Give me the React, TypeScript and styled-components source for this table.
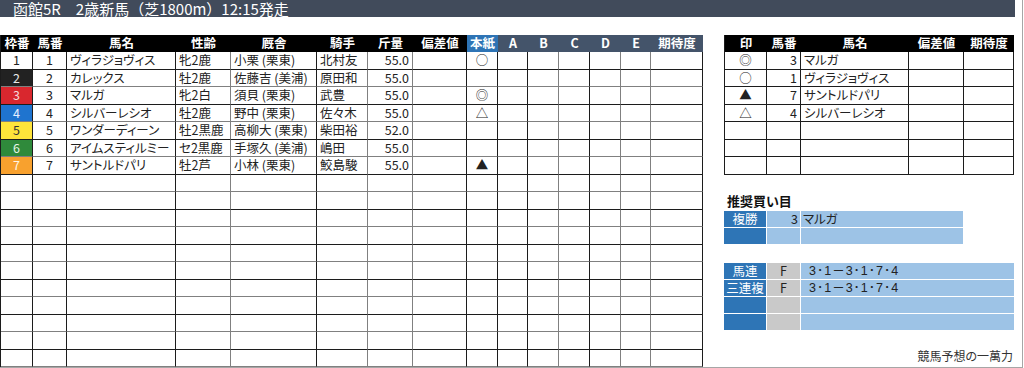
import React from 'react';
import styled, { createGlobalStyle } from 'styled-components';

const GlobalStyle = createGlobalStyle`
  html, body { margin: 0; padding: 0; background: #fff; }
  body {
    font-family: "Noto Sans CJK JP", "Noto Sans", sans-serif;
    color: #222;
    font-feature-settings: "palt";
  }
`;

const BLACK = '#1c1c1c';
const GREY = '#808080';

type Align = 'left' | 'center' | 'right';
type Head = 'black' | 'blue' | 'slate';

interface Col {
  label: string;
  width: number;
  align: Align;
  line: string;
  head: Head;
}

const MAIN_COLS: Col[] = [
  { label: '枠番', width: 33, align: 'center', line: BLACK, head: 'black' },
  { label: '馬番', width: 34, align: 'center', line: BLACK, head: 'black' },
  { label: '馬名', width: 109, align: 'left', line: BLACK, head: 'black' },
  { label: '性齢', width: 55, align: 'left', line: GREY, head: 'black' },
  { label: '厩舎', width: 86, align: 'left', line: BLACK, head: 'black' },
  { label: '騎手', width: 51, align: 'left', line: GREY, head: 'black' },
  { label: '斤量', width: 45, align: 'right', line: GREY, head: 'black' },
  { label: '偏差値', width: 54, align: 'center', line: BLACK, head: 'black' },
  { label: '本紙', width: 31, align: 'center', line: BLACK, head: 'blue' },
  { label: 'A', width: 30, align: 'center', line: BLACK, head: 'slate' },
  { label: 'B', width: 31, align: 'center', line: GREY, head: 'slate' },
  { label: 'C', width: 31, align: 'center', line: BLACK, head: 'slate' },
  { label: 'D', width: 31, align: 'center', line: GREY, head: 'slate' },
  { label: 'E', width: 30, align: 'center', line: GREY, head: 'slate' },
  { label: '期待度', width: 52, align: 'center', line: BLACK, head: 'slate' },
];

const MARK_COLS: Col[] = [
  { label: '印', width: 43, align: 'center', line: BLACK, head: 'black' },
  { label: '馬番', width: 34, align: 'right', line: BLACK, head: 'black' },
  { label: '馬名', width: 108, align: 'left', line: BLACK, head: 'black' },
  { label: '偏差値', width: 55, align: 'center', line: BLACK, head: 'black' },
  { label: '期待度', width: 50, align: 'center', line: BLACK, head: 'black' },
];

const WAKU: { bg: string; fg: string }[] = [
  { bg: '#ffffff', fg: '#222' },
  { bg: '#222222', fg: '#e8e8e8' },
  { bg: '#d9272e', fg: '#f6d6d6' },
  { bg: '#1f74cf', fg: '#e6f0ff' },
  { bg: '#ffe43a', fg: '#333' },
  { bg: '#2f8a3b', fg: '#e6f5e6' },
  { bg: '#f8a12e', fg: '#fff6e8' },
];

const HORSES = [
  ['1', 'ヴィラジョヴィス', '牝2鹿', '小栗 (栗東)', '北村友', '55.0', '', '○'],
  ['2', 'カレックス', '牡2鹿', '佐藤吉 (美浦)', '原田和', '55.0', '', ''],
  ['3', 'マルガ', '牝2白', '須貝 (栗東)', '武豊', '55.0', '', '◎'],
  ['4', 'シルバーレシオ', '牡2鹿', '野中 (栗東)', '佐々木', '55.0', '', '△'],
  ['5', 'ワンダーディーン', '牡2黒鹿', '高柳大 (栗東)', '柴田裕', '52.0', '', ''],
  ['6', 'アイムスティルミー', 'セ2黒鹿', '手塚久 (美浦)', '嶋田', '55.0', '', ''],
  ['7', 'サントルドパリ', '牡2芦', '小林 (栗東)', '鮫島駿', '55.0', '', '▲'],
];

const MARKS = [
  ['◎', '3', 'マルガ'],
  ['○', '1', 'ヴィラジョヴィス'],
  ['▲', '7', 'サントルドパリ'],
  ['△', '4', 'シルバーレシオ'],
];

const HEAD_BG: Record<Head, string> = {
  black: '#000000',
  blue: '#2e74b5',
  slate: '#44546a',
};

const rowHeight = (i: number) => (i % 2 === 0 ? 18 : 17);

const JUSTIFY: Record<Align, string> = {
  left: 'flex-start',
  center: 'center',
  right: 'flex-end',
};

const Sheet = styled.div`
  width: 1023px;
  height: 368px;
  box-sizing: border-box;
  border-right: 1px solid #a6a6a6;
  border-bottom: 1px solid #a6a6a6;
  display: flex;
  flex-direction: column;
  overflow: hidden;
`;

const TitleBar = styled.div`
  width: 1015px;
  height: 17px;
  flex-shrink: 0;
  display: flex;
  align-items: center;
  background: #414b5b;
  color: #fff;
  font-size: 15px;
  line-height: 1;
  padding-left: 13px;
  box-sizing: border-box;
  white-space: pre;
  font-feature-settings: normal;
`;

const Content = styled.div`
  display: flex;
  align-items: flex-start;
  margin-top: 18px;
  flex: 1;
`;

const Grid = styled.div`
  display: flex;
  flex-direction: column;
  border-left: 1px solid ${BLACK};
`;

const Row = styled.div<{ $h: number; $cols: string }>`
  display: grid;
  grid-template-columns: ${(p) => p.$cols};
  height: ${(p) => p.$h}px;
`;

const Cell = styled.div<{
  $align: Align;
  $line: string;
  $bottom: string;
  $bg?: string;
  $fg?: string;
}>`
  box-sizing: border-box;
  display: flex;
  align-items: center;
  justify-content: ${(p) => JUSTIFY[p.$align]};
  border-right: 1px solid ${(p) => p.$line};
  border-bottom: 1px solid ${(p) => p.$bottom};
  background: ${(p) => p.$bg ?? '#fff'};
  color: ${(p) => p.$fg ?? '#222'};
  font-size: 12.5px;
  line-height: 1;
  padding: 0 ${(p) => (p.$align === 'center' ? 0 : 3)}px;
  white-space: nowrap;
`;

const HeadCell = styled.div<{ $bg: string }>`
  display: flex;
  align-items: center;
  justify-content: center;
  background: ${(p) => p.$bg};
  color: #fff;
  font-weight: bold;
  font-size: 12.5px;
  line-height: 1;
  white-space: nowrap;
`;

const Side = styled.div`
  margin-left: 21px;
  width: 291px;
  height: 332px;
  display: flex;
  flex-direction: column;
`;

const SectionTitle = styled.div`
  margin: 19px 0 4px 3px;
  font-size: 13px;
  font-weight: bold;
  line-height: 13px;
  color: #111;
`;

const Block = styled.div<{ $gapTop: number }>`
  display: flex;
  flex-direction: column;
  gap: 1px;
  margin-top: ${(p) => p.$gapTop}px;
`;

const BuyRow = styled.div<{ $cols: string }>`
  display: grid;
  grid-template-columns: ${(p) => p.$cols};
  column-gap: 1px;
  height: 16px;
`;

const BuyCell = styled.div<{ $bg: string; $fg?: string; $align: Align; $pad?: number }>`
  display: flex;
  align-items: center;
  justify-content: ${(p) => JUSTIFY[p.$align]};
  background: ${(p) => p.$bg};
  color: ${(p) => p.$fg ?? '#222'};
  font-size: 12.5px;
  line-height: 1;
  padding: 0 ${(p) => p.$pad ?? 2}px;
  white-space: nowrap;
`;

const Combo = styled.span`
  letter-spacing: 1px;
  font-family: "Liberation Sans", "Noto Sans CJK JP", sans-serif;
  font-size: 12.5px;
`;

const Footer = styled.div`
  margin-top: auto;
  margin-bottom: 3px;
  text-align: right;
  padding-right: 2px;
  font-size: 12px;
  line-height: 16px;
  color: #333;
`;

const DARK = '#2e75b6';
const LIGHT = '#9dc3e6';
const SILVER = '#c9c9c9';

const colTemplate = (cols: Col[]) =>
  cols.map((c, i) => `${i === 0 ? c.width - 1 : c.width}px`).join(' ');

const HeaderRow: React.FC<{ cols: Col[] }> = ({ cols }) => (
  <Row $h={17} $cols={colTemplate(cols)}>
    {cols.map((c) => (
      <HeadCell key={c.label} $bg={HEAD_BG[c.head]}>
        {c.label}
      </HeadCell>
    ))}
  </Row>
);

const MainTable: React.FC = () => {
  const values = (i: number): string[] => {
    const h = HORSES[i];
    if (!h) return MAIN_COLS.map(() => '');
    return [h[0], h[0], h[1], h[2], h[3], h[4], h[5], h[6], h[7], '', '', '', '', '', ''];
  };
  return (
    <Grid>
      <HeaderRow cols={MAIN_COLS} />
      {Array.from({ length: 18 }, (_, i) => {
        const v = values(i);
        const waku = i < HORSES.length ? WAKU[i] : undefined;
        return (
          <Row key={i} $h={rowHeight(i)} $cols={colTemplate(MAIN_COLS)}>
            {MAIN_COLS.map((c, j) => (
              <Cell
                key={j}
                $align={c.align}
                $line={c.line}
                $bottom={i % 2 === 0 ? BLACK : GREY}
                $bg={j === 0 && waku ? waku.bg : undefined}
                $fg={j === 0 && waku ? waku.fg : undefined}
              >
                {v[j]}
              </Cell>
            ))}
          </Row>
        );
      })}
    </Grid>
  );
};

const MarkTable: React.FC = () => (
  <Grid>
    <HeaderRow cols={MARK_COLS} />
    {Array.from({ length: 7 }, (_, i) => {
      const m = MARKS[i] ?? ['', '', ''];
      return (
        <Row key={i} $h={rowHeight(i)} $cols={colTemplate(MARK_COLS)}>
          {MARK_COLS.map((c, j) => (
            <Cell key={j} $align={c.align} $line={BLACK} $bottom={BLACK}>
              {m[j] ?? ''}
            </Cell>
          ))}
        </Row>
      );
    })}
  </Grid>
);

const WIN_COLS = '42px 33px 162px';
const COMBO_COLS = '42px 33px 213px';

const COMBOS = [
  ['馬連', 'F', '3･1－3･1･7･4'],
  ['三連複', 'F', '3･1－3･1･7･4'],
  ['', '', ''],
  ['', '', ''],
];

const App: React.FC = () => (
  <>
    <GlobalStyle />
    <Sheet>
      <TitleBar>函館5R　2歳新馬（芝1800m）12:15発走</TitleBar>
      <Content>
        <MainTable />
        <Side>
          <MarkTable />
          <SectionTitle>推奨買い目</SectionTitle>
          <Block $gapTop={0}>
            <BuyRow $cols={WIN_COLS}>
              <BuyCell $bg={DARK} $fg="#fff" $align="center">複勝</BuyCell>
              <BuyCell $bg={LIGHT} $align="right">3</BuyCell>
              <BuyCell $bg={LIGHT} $align="left">マルガ</BuyCell>
            </BuyRow>
            <BuyRow $cols={WIN_COLS}>
              <BuyCell $bg={DARK} $align="center" />
              <BuyCell $bg={LIGHT} $align="right" />
              <BuyCell $bg={LIGHT} $align="left" />
            </BuyRow>
          </Block>
          <Block $gapTop={19}>
            {COMBOS.map((r, i) => (
              <BuyRow key={i} $cols={COMBO_COLS}>
                <BuyCell $bg={DARK} $fg="#fff" $align="center" $pad={0}>{r[0]}</BuyCell>
                <BuyCell $bg={SILVER} $align="center">{r[1]}</BuyCell>
                <BuyCell $bg={LIGHT} $align="left" $pad={8}>
                  <Combo>{r[2]}</Combo>
                </BuyCell>
              </BuyRow>
            ))}
          </Block>
          <Footer>競馬予想の一萬力</Footer>
        </Side>
      </Content>
    </Sheet>
  </>
);

export default App;
